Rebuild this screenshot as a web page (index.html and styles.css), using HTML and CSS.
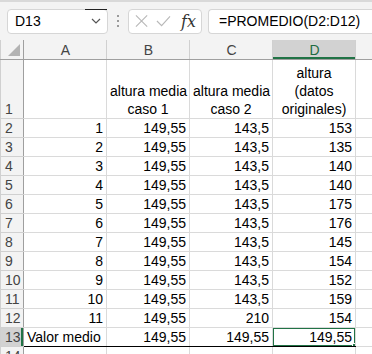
FILE: index.html
```html
<!DOCTYPE html>
<html lang="es">
<head>
<meta charset="utf-8">
<title>Hoja de cálculo</title>
<link rel="stylesheet" href="styles.css">
</head>
<body>
  <div class="bar">
    <div class="namebox">
      <span class="ref">D13</span>
      <span class="drop">
        <svg width="10" height="6" viewBox="0 0 10 6"><path d="M1 1 L5 5 L9 1" fill="none" stroke="#555" stroke-width="1.2"/></svg>
      </span>
    </div>
    <div class="dots"><i></i><i></i><i></i></div>
    <div class="fxbox">
      <svg width="14" height="14" viewBox="0 0 14 14"><path d="M1 1 L13 13 M13 1 L1 13" stroke="#b8b8b8" stroke-width="1.2"/></svg>
      <svg width="16" height="14" viewBox="0 0 16 14"><path d="M1 7 L6 12 L15 2" fill="none" stroke="#b8b8b8" stroke-width="1.2"/></svg>
      <span class="fx">fx</span>
    </div>
    <div class="formula">=PROMEDIO(D2:D12)</div>
  </div>

  <table class="sheet">
    <colgroup>
      <col class="c-hd"><col class="c-w"><col class="c-w"><col class="c-w"><col class="c-w"><col>
    </colgroup>
    <tr class="colhead">
      <th class="corner"><span class="tri"></span></th>
      <th>A</th><th>B</th><th>C</th><th class="on">D</th><th></th>
    </tr>
    <tr class="tall">
      <th>1</th>
      <td></td>
      <td class="ctr">altura media<br>caso 1</td>
      <td class="ctr">altura media<br>caso 2</td>
      <td class="ctr">altura<br>(datos<br>originales)</td>
      <td></td>
    </tr>
    <tr><th>2</th><td class="num">1</td><td class="num">149,55</td><td class="num">143,5</td><td class="num">153</td><td></td></tr>
    <tr><th>3</th><td class="num">2</td><td class="num">149,55</td><td class="num">143,5</td><td class="num">135</td><td></td></tr>
    <tr><th>4</th><td class="num">3</td><td class="num">149,55</td><td class="num">143,5</td><td class="num">140</td><td></td></tr>
    <tr><th>5</th><td class="num">4</td><td class="num">149,55</td><td class="num">143,5</td><td class="num">140</td><td></td></tr>
    <tr><th>6</th><td class="num">5</td><td class="num">149,55</td><td class="num">143,5</td><td class="num">175</td><td></td></tr>
    <tr><th>7</th><td class="num">6</td><td class="num">149,55</td><td class="num">143,5</td><td class="num">176</td><td></td></tr>
    <tr><th>8</th><td class="num">7</td><td class="num">149,55</td><td class="num">143,5</td><td class="num">145</td><td></td></tr>
    <tr><th>9</th><td class="num">8</td><td class="num">149,55</td><td class="num">143,5</td><td class="num">154</td><td></td></tr>
    <tr><th>10</th><td class="num">9</td><td class="num">149,55</td><td class="num">143,5</td><td class="num">152</td><td></td></tr>
    <tr><th>11</th><td class="num">10</td><td class="num">149,55</td><td class="num">143,5</td><td class="num">159</td><td></td></tr>
    <tr><th>12</th><td class="num">11</td><td class="num">149,55</td><td class="num">210</td><td class="num">154</td><td></td></tr>
    <tr class="total">
      <th class="on">13</th>
      <td>Valor medio</td>
      <td class="num">149,55</td>
      <td class="num">149,55</td>
      <td class="num sel">149,55<span class="handle"></span></td>
      <td class="plain"></td>
    </tr>
    <tr><th>14</th><td></td><td></td><td></td><td></td><td></td></tr>
  </table>
</body>
</html>
```

FILE: styles.css
```css
body {
    margin: 0;
    background: #fff;
    font-family: "Liberation Sans", Arial, sans-serif;
    font-size: 14px;
    color: #000;
    overflow: hidden;
}

/* formula bar */
.bar {
    display: flex;
    align-items: center;
    height: 38px;
    padding: 0 0 0 7px;
    background: #f3f3f3;
    border-top: 2px solid #d9d9d9;
}
.namebox, .fxbox, .formula {
    box-sizing: border-box;
    height: 25px;
    background: #fff;
    border: 1px solid #d6d6d6;
    border-radius: 4px;
    display: flex;
    align-items: center;
}
.namebox {
    width: 101px;
    padding-left: 7px;
    justify-content: space-between;
}
.drop {
    width: 22px;
    height: 23px;
    display: flex;
    align-items: center;
    justify-content: center;
    border-top: 1px solid #222;
    box-sizing: border-box;
    margin-top: -1px;
}
.dots {
    width: 20px;
    display: flex;
    flex-direction: column;
    align-items: center;
    gap: 3px;
}
.dots i {
    width: 2px;
    height: 2px;
    background: #9a9a9a;
}
.fxbox {
    width: 74px;
    padding: 0 5px 0 6px;
    gap: 8px;
}
.fx {
    font-family: "DejaVu Serif", "Liberation Serif", serif;
    font-style: italic;
    font-size: 16px;
    color: #333;
    margin-left: 2px;
}
.formula {
    flex: 1;
    margin-left: 6px;
    padding-left: 10px;
    border-right: 0;
    border-radius: 4px 0 0 4px;
}

/* grid */
.sheet {
    border-collapse: collapse;
    table-layout: fixed;
    width: 390px;
}
.c-hd { width: 23px; }
.c-w { width: 83px; }
.sheet th, .sheet td {
    border: 1px solid #dadada;
    height: 18px;
    padding: 0 3px;
    white-space: nowrap;
    overflow: hidden;
    line-height: 18px;
}
.sheet th {
    background: #f3f3f3;
    font-weight: normal;
    color: #444;
    text-align: left;
    padding-left: 4px;
    border-color: #d0d0d0;
}
.colhead th {
    height: 19px;
    text-align: center;
    border-top: 0;
    border-bottom: 1px solid #9f9f9f;
    border-left-color: #d0d0d0;
}
.colhead th.on {
    background: #d2d2d2;
    color: #1e6b41;
    box-shadow: inset 0 -2px 0 #217346;
}
.corner { position: relative; border-right: 1px solid #9f9f9f; }
.tri {
    position: absolute;
    right: 3px;
    bottom: 3px;
    width: 0;
    height: 0;
    border-left: 12px solid transparent;
    border-bottom: 12px solid #b3b3b3;
}
.sheet tr > th:first-child { border-right: 1px solid #9f9f9f; }
.tall td, .tall th {
    height: 58px;
    vertical-align: bottom;
}
.ctr {
    text-align: center;
    white-space: normal;
}
.num { text-align: right; }
.total td {
    border-top: 1px solid #000;
    border-bottom: 1px solid #000;
}
.total td.plain { border-top-color: #dadada; border-bottom-color: #dadada; }
.total th.on {
    background: #d2d2d2;
    box-shadow: inset -2px 0 0 #217346;
}
.sel {
    position: relative;
    overflow: visible;
}
.sel::after {
    content: "";
    position: absolute;
    left: -1px;
    top: -1px;
    right: -1px;
    bottom: -1px;
    border: 2px solid #217346;
}
.handle {
    position: absolute;
    right: -4px;
    bottom: -4px;
    width: 5px;
    height: 5px;
    background: #217346;
    border: 1px solid #fff;
    z-index: 1;
}
```
